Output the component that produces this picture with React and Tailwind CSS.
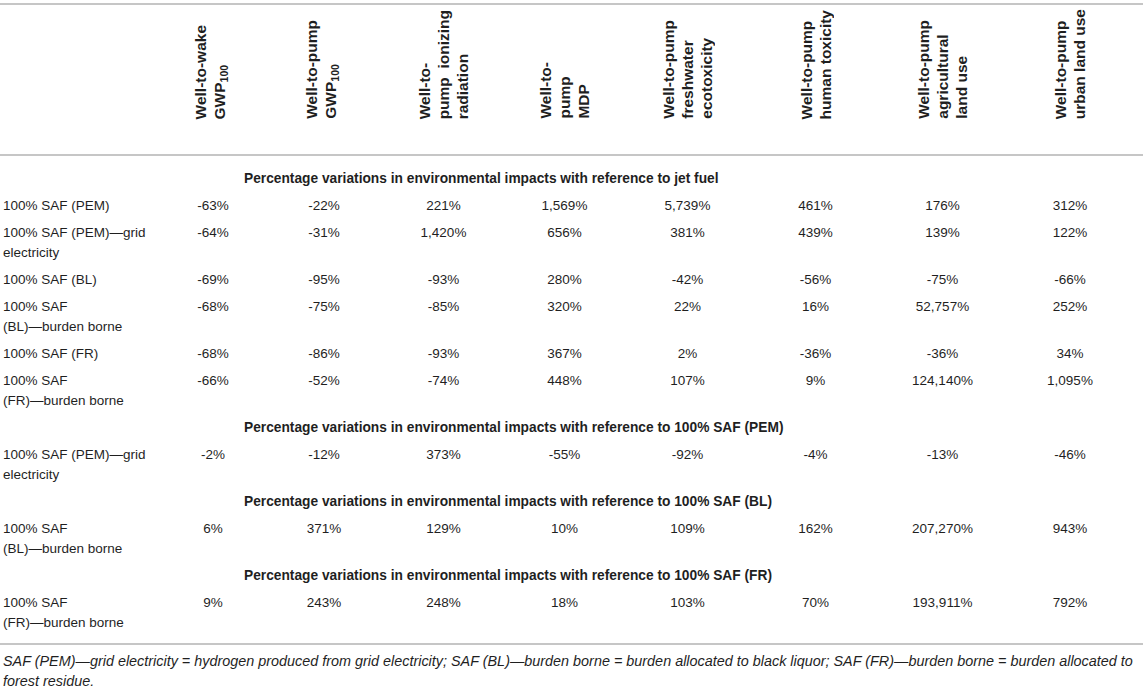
const heads = [
  [["Well-to-wake"], ["GWP", "100"]],
  [["Well-to-pump"], ["GWP", "100"]],
  [["Well-to-"], ["pump\u00a0\u00a0ionizing"], ["radiation"]],
  [["Well-to-"], ["pump"], ["MDP"]],
  [["Well-to-pump"], ["freshwater"], ["ecotoxicity"]],
  [["Well-to-pump"], ["human toxicity"]],
  [["Well-to-pump"], ["agricultural"], ["land use"]],
  [["Well-to-pump"], ["urban land use"]],
];

// column widths tuned so each value column centres where the source has it
const widths = [106, 116, 123, 119, 127, 129, 125, 130];

const sections = [
  {
    title: "Percentage variations in environmental impacts with reference to jet fuel",
    rows: [
      [["100% SAF (PEM)"], ["-63%", "-22%", "221%", "1,569%", "5,739%", "461%", "176%", "312%"]],
      [["100% SAF (PEM)\u2014grid", "electricity"], ["-64%", "-31%", "1,420%", "656%", "381%", "439%", "139%", "122%"]],
      [["100% SAF (BL)"], ["-69%", "-95%", "-93%", "280%", "-42%", "-56%", "-75%", "-66%"]],
      [["100% SAF", "(BL)\u2014burden borne"], ["-68%", "-75%", "-85%", "320%", "22%", "16%", "52,757%", "252%"]],
      [["100% SAF (FR)"], ["-68%", "-86%", "-93%", "367%", "2%", "-36%", "-36%", "34%"]],
      [["100% SAF", "(FR)\u2014burden borne"], ["-66%", "-52%", "-74%", "448%", "107%", "9%", "124,140%", "1,095%"]],
    ],
  },
  {
    title: "Percentage variations in environmental impacts with reference to 100% SAF (PEM)",
    rows: [[["100% SAF (PEM)\u2014grid", "electricity"], ["-2%", "-12%", "373%", "-55%", "-92%", "-4%", "-13%", "-46%"]]],
  },
  {
    title: "Percentage variations in environmental impacts with reference to 100% SAF (BL)",
    rows: [[["100% SAF", "(BL)\u2014burden borne"], ["6%", "371%", "129%", "10%", "109%", "162%", "207,270%", "943%"]]],
  },
  {
    title: "Percentage variations in environmental impacts with reference to 100% SAF (FR)",
    rows: [[["100% SAF", "(FR)\u2014burden borne"], ["9%", "243%", "248%", "18%", "103%", "70%", "193,911%", "792%"]]],
  },
];

function HeadCell({ lines }) {
  return (
    <th className="p-0 pb-[35px] align-bottom">
      <div className="flex justify-center">
        <div className="[writing-mode:vertical-rl] rotate-180 text-start whitespace-nowrap text-[15.5px] leading-[19px] font-bold">
          {lines.map((l, i) => (
            <div key={i}>
              {l[0]}
              {l[1] && <span className="align-sub text-[10.5px]">{l[1]}</span>}
            </div>
          ))}
        </div>
      </div>
    </th>
  );
}

export default function App() {
  return (
    <div className="w-[1143px] bg-white pt-[3px] text-[#1f1f1f]" style={{ fontFamily: '"Liberation Sans", Arial, sans-serif' }}>
      <div className="border-t-2 border-[#c6c6c6]">
        <table className="table-fixed w-[1143px] border-collapse">
          <colgroup>
            <col style={{ width: 160 }} />
            {widths.map((w, i) => (
              <col key={i} style={{ width: w }} />
            ))}
            <col style={{ width: 8 }} />
          </colgroup>
          <thead>
            <tr className="h-[150px] border-b-2 border-[#c6c6c6]">
              <th className="p-0"></th>
              {heads.map((h, i) => (
                <HeadCell key={i} lines={h} />
              ))}
              <th className="p-0"></th>
            </tr>
          </thead>
          <tbody className="text-[13.5px] leading-[20px]">
            {sections.map((s, si) => (
              <>
                <tr key={"t" + si}>
                  <td></td>
                  <td colSpan={9} className={`pl-[84px] pb-[3.5px] font-bold text-[13.75px] whitespace-nowrap ${si === 0 ? "pt-[13px]" : "pt-[3.5px]"}`}>
                    {s.title}
                  </td>
                </tr>
                {s.rows.map((r, ri) => (
                  <tr key={si + "-" + ri}>
                    <td className="pl-[3px] py-[3.5px] align-top whitespace-nowrap">
                      {r[0].map((t, i) => (
                        <div key={i}>{t}</div>
                      ))}
                    </td>
                    {r[1].map((v, i) => (
                      <td key={i} className="py-[3.5px] text-center align-top">
                        {v}
                      </td>
                    ))}
                    <td></td>
                  </tr>
                ))}
              </>
            ))}
          </tbody>
        </table>
      </div>
      <div className="mt-[6px] border-t-2 border-[#c6c6c6] pt-[6px] pl-[3px] pr-[2px] italic text-[14.4px] leading-[20px]">
        SAF (PEM)—grid electricity = hydrogen produced from grid electricity; SAF (BL)—burden borne = burden allocated to black liquor; SAF (FR)—burden borne = burden allocated to forest residue.
      </div>
    </div>
  );
}
